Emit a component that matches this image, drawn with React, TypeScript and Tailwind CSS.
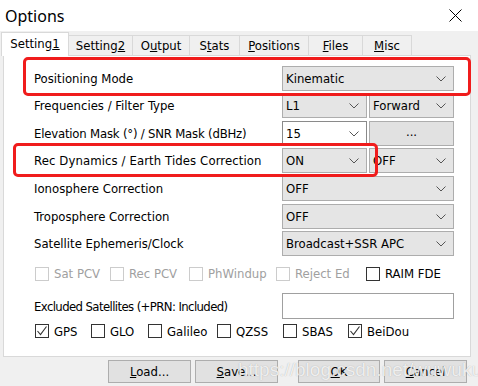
import React from "react";

const FONT = { fontFamily: '"DejaVu Sans Condensed", "DejaVu Sans", sans-serif' };

function Chevron() {
  return (
    <svg width="10" height="6" viewBox="0 0 10 6" className="shrink-0">
      <polyline points="0.5,0.5 5,5 9.5,0.5" fill="none" stroke="#555" strokeWidth="1" />
    </svg>
  );
}

function Combo({ text, w }: { text: string; w: string }) {
  return (
    <div className={`${w} h-[25px] bg-[#e5e5e5] border border-[#adadad] flex items-center justify-between pl-[3px] pr-[7px]`}>
      <span>{text}</span>
      <Chevron />
    </div>
  );
}

function Box({ checked, disabled }: { checked?: boolean; disabled?: boolean }) {
  return (
    <div
      className={`w-[14px] h-[14px] shrink-0 bg-white border ${disabled ? "border-[#cccccc]" : "border-[#333333]"} flex items-center justify-center`}
    >
      {checked && (
        <svg width="12" height="12" viewBox="0 0 12 12">
          <polyline points="1.5,6 4.5,9.5 10.5,1.5" fill="none" stroke="#333" strokeWidth="1.1" />
        </svg>
      )}
    </div>
  );
}

function Check({ label, w, checked, disabled }: { label: string; w: string; checked?: boolean; disabled?: boolean }) {
  return (
    <div className={`${w} flex items-center gap-[5px] shrink-0`}>
      <Box checked={checked} disabled={disabled} />
      <span className={disabled ? "text-[#a0a0a0]" : ""}>{label}</span>
    </div>
  );
}

function Row({ label, children, mt, lc }: { label: string; children: React.ReactNode; mt: string; lc?: string }) {
  return (
    <div className={`flex items-center h-[25px] ${mt}`}>
      <div className={`w-[248px] whitespace-nowrap ${lc ?? ""}`}>{label}</div>
      {children}
    </div>
  );
}

function Tab({ children, w, selected }: { children: React.ReactNode; w: string; selected?: boolean }) {
  return selected ? (
    <div className={`${w} h-[24px] mb-[-1px] relative z-10 bg-white border border-b-0 border-[#d9d9d9] flex items-center justify-center pb-[2px]`}>
      {children}
    </div>
  ) : (
    <div className={`${w} h-[20px] bg-[#f0f0f0] border border-b-0 border-l-0 border-[#d9d9d9] flex items-center justify-center`}>
      {children}
    </div>
  );
}

export default function App() {
  return (
    <div className="relative w-[478px] h-[386px] overflow-hidden bg-[#f0f0f0] text-[13px] text-black leading-none" style={FONT}>
      {/* title bar */}
      <div className="h-[31px] bg-white flex items-center justify-between pl-[5px] pr-[16px]">
        <span className="text-[16px]" style={{ fontFamily: '"Noto Sans", sans-serif' }}>Options</span>
        <svg width="13" height="13" viewBox="0 0 13 13">
          <path d="M0.5 0.5 L12.5 12.5 M12.5 0.5 L0.5 12.5" stroke="#000" strokeWidth="1" />
        </svg>
      </div>

      {/* tabs */}
      <div className="flex items-end h-[24px] ml-[1px]">
        <Tab w="w-[68px]" selected>
          <span>Setting<u>1</u></span>
        </Tab>
        <Tab w="w-[64px]">
          <span>Setting<u>2</u></span>
        </Tab>
        <Tab w="w-[57px]">
          <span>O<u>u</u>tput</span>
        </Tab>
        <Tab w="w-[50px]">
          <span>S<u>t</u>ats</span>
        </Tab>
        <Tab w="w-[69px]">
          <span><u>P</u>ositions</span>
        </Tab>
        <Tab w="w-[54px]">
          <span><u>F</u>iles</span>
        </Tab>
        <Tab w="w-[49px]">
          <span><u>M</u>isc</span>
        </Tab>
      </div>

      {/* panel */}
      <div className="ml-[3px] w-[468px] h-[302px] bg-white border border-[#d9d9d9] pt-[10px] pl-[30px]">
        <div className="flex flex-col">
          <Row label="Positioning Mode" mt="mt-0">
            <Combo text="Kinematic" w="w-[172px]" />
          </Row>
          <Row label="Frequencies / Filter Type" mt="mt-[2px]">
            <div className="flex gap-[2px]">
              <Combo text="L1" w="w-[85px]" />
              <Combo text="Forward" w="w-[85px]" />
            </div>
          </Row>
          <Row label="Elevation Mask (°) / SNR Mask (dBHz)" mt="mt-[3px]" lc="tracking-[-0.2px]">
            <div className="flex gap-[2px]">
              <div className="w-[85px] h-[25px] bg-white border border-[#8a8a8a] flex items-center justify-between pl-[3px] pr-[7px]">
                <span>15</span>
                <Chevron />
              </div>
              <div className="w-[85px] h-[25px] bg-[#e1e1e1] border border-[#adadad] flex items-center justify-center pb-[4px]">
                ...
              </div>
            </div>
          </Row>
          <Row label="Rec Dynamics / Earth Tides Correction" mt="mt-[2px]" lc="tracking-[0.1px]">
            <div className="flex gap-[2px]">
              <Combo text="ON" w="w-[85px]" />
              <Combo text="OFF" w="w-[85px]" />
            </div>
          </Row>
          <Row label="Ionosphere Correction" mt="mt-[3px]">
            <Combo text="OFF" w="w-[172px]" />
          </Row>
          <Row label="Troposphere Correction" mt="mt-[3px]">
            <Combo text="OFF" w="w-[172px]" />
          </Row>
          <Row label="Satellite Ephemeris/Clock" mt="mt-[2px]">
            <Combo text="Broadcast+SSR APC" w="w-[172px]" />
          </Row>
        </div>

        <div className="flex items-center h-[25px] mt-[5px] ml-[1px]">
          <Check label="Sat PCV" w="w-[75px]" disabled />
          <Check label="Rec PCV" w="w-[79px]" disabled />
          <Check label="PhWindup" w="w-[87px]" disabled />
          <Check label="Reject Ed" w="w-[90px]" disabled />
          <Check label="RAIM FDE" w="w-[90px]" />
        </div>

        <div className="flex items-center h-[26px] mt-[7px]">
          <div className="w-[248px] whitespace-nowrap tracking-[-0.6px]">Excluded Satellites (+PRN: Included)</div>
          <div className="w-[172px] h-[26px] bg-white border border-[#a0a0a0]" />
        </div>

        <div className="flex items-center h-[24px] ml-[1px]">
          <Check label="GPS" w="w-[56px]" checked />
          <Check label="GLO" w="w-[57px]" />
          <Check label="Galileo" w="w-[69px]" />
          <Check label="QZSS" w="w-[66px]" />
          <Check label="SBAS" w="w-[65px]" />
          <Check label="BeiDou" w="w-[80px]" checked />
        </div>
      </div>

      {/* buttons */}
      <div className="flex mt-[3px] ml-[108px] h-[23px]">
        <div className="w-[83px] h-[23px] bg-[#e1e1e1] border border-[#adadad] flex items-center justify-center">
          <span><u>L</u>oad...</span>
        </div>
        <div className="w-[83px] h-[23px] ml-[4px] bg-[#e1e1e1] border border-[#adadad] flex items-center justify-center">
          <span><u>S</u>ave...</span>
        </div>
        <div className="w-[82px] h-[23px] ml-[20px] bg-[#e1e1e1] border border-[#adadad] flex items-center justify-center">
          <span><u>O</u>K</span>
        </div>
        <div className="w-[83px] h-[23px] ml-[4px] bg-[#e1e1e1] border border-[#adadad] flex items-center justify-center">
          <span><u>C</u>ancel</span>
        </div>
      </div>

      {/* annotations */}
      <div className="absolute left-[23px] top-[57px] w-[448px] h-[39px] border-[3px] border-[#f01c1c] rounded-[5px] pointer-events-none" />
      <div className="absolute left-[13px] top-[143px] w-[365px] h-[34px] border-[3px] border-[#f01c1c] rounded-[5px] pointer-events-none" />

      {/* watermark */}
      <div
        className="absolute left-[238px] top-[360px] text-[19px] text-white/80 whitespace-nowrap pointer-events-none"
        style={{ fontFamily: '"Liberation Sans", sans-serif', textShadow: "0 0 1px rgba(120,120,120,0.6)" }}
      >
        https://blog.csdn.net/wuwuku123
      </div>
    </div>
  );
}
